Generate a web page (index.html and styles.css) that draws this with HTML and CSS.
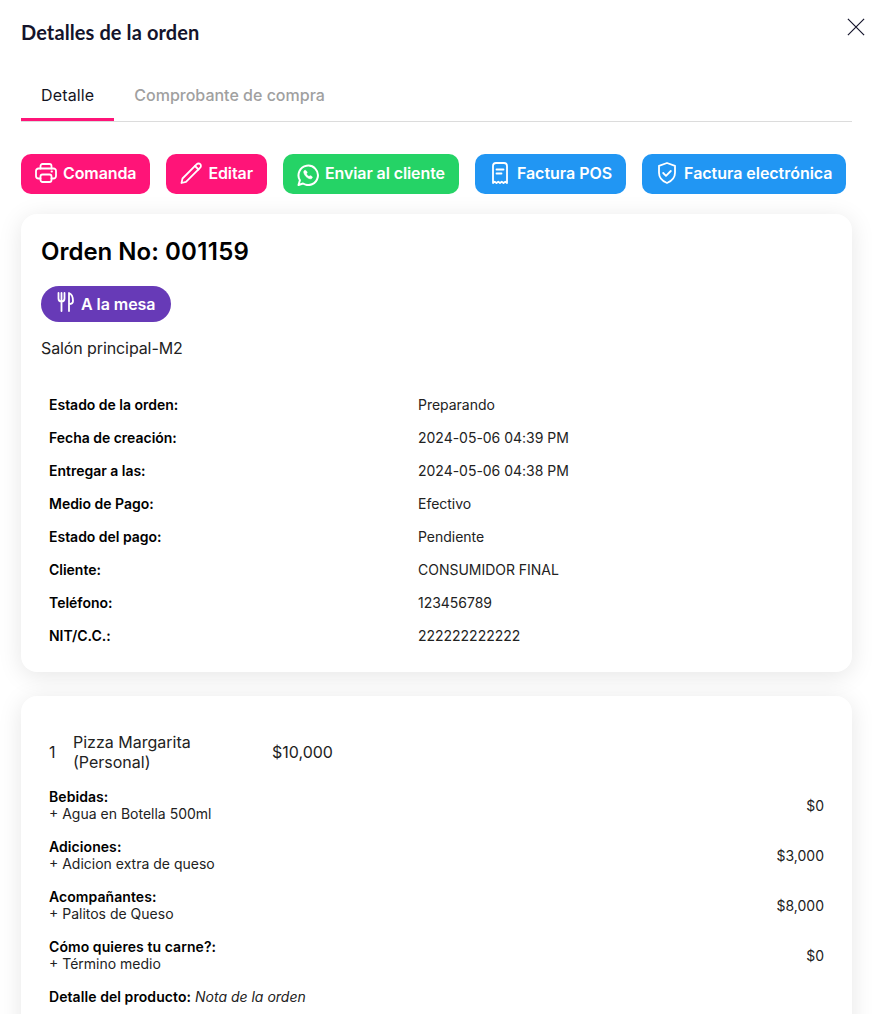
FILE: index.html
```html
<!DOCTYPE html>
<html lang="es">
<head>
<meta charset="utf-8">
<title>Detalles de la orden</title>
<link rel="stylesheet" href="styles.css">
</head>
<body>
<div class="modal">
  <header class="head">
    <h1 class="title">Detalles de la orden</h1>
    <svg class="close" viewBox="0 0 20 20"><path d="M1 1L19 19M19 1L1 19"/></svg>
  </header>
  <nav class="tabs">
    <div class="tab active">Detalle</div>
    <div class="tab">Comprobante de compra</div>
  </nav>
  <div class="actions">
    <div class="btn pink"><svg class="ic" viewBox="0 0 22 22"><path d="M5.500 6.500V4A2 2 0 0 1 7.500 2h7a2 2 0 0 1 2 2v2.500"/><path d="M5.500 16.500H3.500A2.500 2.500 0 0 1 1 14V9a2.500 2.500 0 0 1 2.500-2.500h15A2.500 2.500 0 0 1 21 9v5a2.500 2.500 0 0 1-2.500 2.500h-2"/><rect x="5.500" y="12.500" width="11" height="7.500" rx="2"/><path d="M16.500 9.500h.5"/></svg>Comanda</div>
    <div class="btn pink"><svg class="ic" viewBox="0 0 22 22"><path d="M1.500 21l1-4.500L16.800 2.200a2.400 2.400 0 0 1 3.400 0l0 0a2.400 2.400 0 0 1 0 3.400L6 19.900z"/><path d="M15 4l3.500 3.500"/></svg>Editar</div>
    <div class="btn green"><svg class="ic wa" viewBox="0 0 22 22"><path d="M1.500 21l1.400-4.700A9.700 9.700 0 1 1 6 19.500z"/><path class="phone" d="M8 6.300c-.9.300-1.400 1.200-1.200 2.300.5 2.800 3.300 5.600 6.200 6.200 1.100.2 2-.3 2.300-1.200.1-.5 0-.9-.4-1.100l-1.300-.7c-.4-.2-.8-.1-1.100.3l-.4.500c-1.200-.5-2.300-1.600-2.800-2.800l.5-.4c.4-.3.5-.7.3-1.100l-.7-1.300c-.2-.3-.6-.4-.900-.2z"/></svg>Enviar al cliente</div>
    <div class="btn blue"><svg class="ic" viewBox="0 0 22 22"><path d="M4 21V4a3 3 0 0 1 3-3h8a3 3 0 0 1 3 3v17l-1.750-1.300L14.500 21l-1.750-1.300L11 21l-1.750-1.300L7.500 21l-1.750-1.300z"/><path d="M7.500 7.500h7M7.500 11.500h5"/></svg>Factura POS</div>
    <div class="btn blue"><svg class="ic" viewBox="0 0 22 22"><path d="M11 1l8 2.800v7c0 5-3.200 8.300-8 10.200-4.800-1.900-8-5.200-8-10.200v-7z"/><path d="M7.200 11l2.800 2.800 4.800-4.800"/></svg>Factura electrónica</div>
  </div>

  <section class="card info">
    <h2 class="order">Orden No: <span class="num">001159</span></h2>
    <div class="pill"><svg class="ic" viewBox="0 0 20 20"><path d="M1.500 1v5.500a3 3 0 0 0 6 0V1M4.500 1v18"/><path d="M12 19V1c2.500 1 4 4.500 4 8 0 2-1.300 3-4 3"/></svg>A la mesa</div>
    <p class="place">Salón principal-M2</p>
    <dl class="rows">
      <dt>Estado de la orden:</dt><dd>Preparando</dd>
      <dt>Fecha de creación:</dt><dd>2024-05-06 04:39 PM</dd>
      <dt>Entregar a las:</dt><dd>2024-05-06 04:38 PM</dd>
      <dt>Medio de Pago:</dt><dd>Efectivo</dd>
      <dt>Estado del pago:</dt><dd>Pendiente</dd>
      <dt>Cliente:</dt><dd>CONSUMIDOR FINAL</dd>
      <dt>Teléfono:</dt><dd>123456789</dd>
      <dt>NIT/C.C.:</dt><dd>222222222222</dd>
    </dl>
  </section>

  <section class="card items">
    <div class="item">
      <span class="qty">1</span>
      <span class="name">Pizza Margarita (Personal)</span>
      <span class="price">$10,000</span>
    </div>
    <div class="extra"><div><b>Bebidas:</b><br>+ Agua en Botella 500ml</div><span>$0</span></div>
    <div class="extra"><div><b>Adiciones:</b><br>+ Adicion extra de queso</div><span>$3,000</span></div>
    <div class="extra"><div><b>Acompañantes:</b><br>+ Palitos de Queso</div><span>$8,000</span></div>
    <div class="extra"><div><b>Cómo quieres tu carne?:</b><br>+ Término medio</div><span>$0</span></div>
    <p class="note"><b>Detalle del producto:</b> <i>Nota de la orden</i></p>
  </section>
</div>
</body>
</html>
```
FILE: styles.css
```css
* { box-sizing: border-box; }
html, body { margin: 0; height: 100%; overflow: hidden; background: #fff; }
body { font-family: Inter, "Liberation Sans", sans-serif; color: #14141f; }
.modal { padding: 0 20px 0 21px; height: 1014px; overflow: hidden; }
.head { display: flex; justify-content: space-between; height: 66px; position: relative; }
.title { margin: 20px 0 0; font-family: Lato, Inter, sans-serif; font-size: 20px; line-height: 24px; font-weight: 700; letter-spacing: .1px; color: #14142b; }
.close { position: absolute; right: -13px; top: 18px; width: 18px; height: 18px; fill: none; stroke: #14142b; stroke-width: 1.300; }
.tabs { display: flex; height: 56px; border-bottom: 1px solid #dcdcdc; }
.tab { padding: 18px 20px 0; height: 55px; font-size: 16px; line-height: 22px; font-weight: 500; color: #a0a0a0; }
.tab.active { color: #14141f; font-weight: 400; letter-spacing: .15px; border-bottom: 3px solid #ff1478; }
.actions { display: flex; gap: 16px; margin-top: 32px; }
.btn { display: flex; align-items: center; gap: 6px; height: 40px; padding: 0 14px 2px; border-radius: 10px; color: #fff; font-size: 16px; font-weight: 600; letter-spacing: -.1px; white-space: nowrap; }
.pink { background: #ff1478; }
.green { background: #25d366; }
.blue { background: #2196f3; letter-spacing: -.03px; }
.ic { width: 22px; height: 22px; fill: none; stroke: #fff; stroke-width: 1.800; stroke-linecap: round; stroke-linejoin: round; flex: none; }
.wa { stroke-width: 2; margin-top: 4px; }
.phone { fill: #fff; stroke-width: .6; }
.card { background: #fff; border-radius: 16px; box-shadow: 0 4px 24px rgba(0,0,0,.1); }
.info { margin-top: 20px; padding: 21px 20px 0; height: 458px; }
.order { margin: 0; font-size: 24px; line-height: 34px; font-weight: 600; color: #000; }
.num { letter-spacing: .33px; }
.pill { display: inline-flex; align-items: center; gap: 4px; height: 36px; margin-top: 17px; padding: 0 16px; border-radius: 18px; background: #673ab7; color: #fff; font-size: 16px; font-weight: 600; letter-spacing: -.05px; }
.pill .ic { width: 20px; height: 20px; margin-top: -4px; }
.place { margin: 16px 0 0; font-size: 16px; line-height: 20px; letter-spacing: -.1px; color: #222; }
.rows { display: grid; grid-template-columns: 369px 1fr; margin: 30px 0 0; padding-left: 8px; font-size: 14px; line-height: 33px; letter-spacing: -.02px; }
.rows dt { font-weight: 600; color: #000; }
.rows dd { margin: 0; color: #222; }
.items { margin-top: 24px; padding: 36px 28px 0; height: 400px; font-size: 14px; line-height: 17px; color: #222; }
.item { display: flex; align-items: center; font-size: 16px; line-height: 20px; }
.qty { width: 24px; }
.name { width: 199px; }
.extra { display: flex; justify-content: space-between; align-items: center; height: 34px; margin-top: 16px; }
.extra b, .note b { letter-spacing: .07px; }
b { font-weight: 600; color: #000; }
.note { margin: 16px 0 0; }
```
